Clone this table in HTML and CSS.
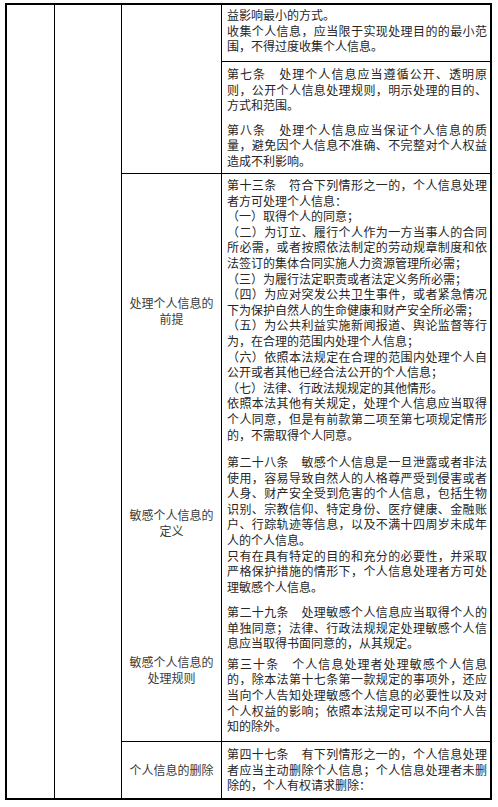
FILE: index.html
```html
<!DOCTYPE html>
<html lang="zh-CN">
<head>
<meta charset="utf-8">
<title>个人信息保护法</title>
<link rel="stylesheet" href="styles.css">
</head>
<body>
<div class="sheet">
  <div class="col c1"></div>
  <div class="col c2"></div>
  <div class="main">
    <div class="row r1">
      <div class="label"></div>
      <div class="content split">
        <div class="sub s1">
          <span class="ln">益影响最小的方式。</span>
          <span class="ln j">收集个人信息，应当限于实现处理目的的最小范</span>
          <span class="ln">围，不得过度收集个人信息。</span>
        </div>
        <div class="sub s2">
          <div class="para">
            <span class="ln j">第七条　处理个人信息应当遵循公开、透明原</span>
            <span class="ln j">则，公开个人信息处理规则，明示处理的目的、</span>
            <span class="ln">方式和范围。</span>
          </div>
          <div class="para gap9">
            <span class="ln j">第八条　处理个人信息应当保证个人信息的质</span>
            <span class="ln j">量，避免因个人信息不准确、不完整对个人权益</span>
            <span class="ln">造成不利影响。</span>
          </div>
        </div>
      </div>
    </div>

    <div class="row r2">
      <div class="label">处理个人信息的<br>前提</div>
      <div class="content">
        <span class="ln j">第十三条　符合下列情形之一的，个人信息处理</span>
        <span class="ln">者方可处理个人信息：</span>
        <span class="ln">（一）取得个人的同意；</span>
        <span class="ln j">（二）为订立、履行个人作为一方当事人的合同</span>
        <span class="ln j">所必需，或者按照依法制定的劳动规章制度和依</span>
        <span class="ln">法签订的集体合同实施人力资源管理所必需；</span>
        <span class="ln">（三）为履行法定职责或者法定义务所必需；</span>
        <span class="ln j">（四）为应对突发公共卫生事件，或者紧急情况</span>
        <span class="ln">下为保护自然人的生命健康和财产安全所必需；</span>
        <span class="ln j">（五）为公共利益实施新闻报道、舆论监督等行</span>
        <span class="ln">为，在合理的范围内处理个人信息；</span>
        <span class="ln j">（六）依照本法规定在合理的范围内处理个人自</span>
        <span class="ln">公开或者其他已经合法公开的个人信息；</span>
        <span class="ln">（七）法律、行政法规规定的其他情形。</span>
        <span class="ln j">依照本法其他有关规定，处理个人信息应当取得</span>
        <span class="ln j">个人同意，但是有前款第二项至第七项规定情形</span>
        <span class="ln">的，不需取得个人同意。</span>
      </div>
    </div>

    <div class="row r3">
      <div class="label">敏感个人信息的<br>定义</div>
      <div class="content">
        <span class="ln j">第二十八条　敏感个人信息是一旦泄露或者非法</span>
        <span class="ln j">使用，容易导致自然人的人格尊严受到侵害或者</span>
        <span class="ln j">人身、财产安全受到危害的个人信息，包括生物</span>
        <span class="ln j">识别、宗教信仰、特定身份、医疗健康、金融账</span>
        <span class="ln j">户、行踪轨迹等信息，以及不满十四周岁未成年</span>
        <span class="ln">人的个人信息。</span>
        <span class="ln j">只有在具有特定的目的和充分的必要性，并采取</span>
        <span class="ln j">严格保护措施的情形下，个人信息处理者方可处</span>
        <span class="ln">理敏感个人信息。</span>
      </div>
    </div>

    <div class="row r4">
      <div class="label">敏感个人信息的<br>处理规则</div>
      <div class="content">
        <div class="para">
          <span class="ln j">第二十九条　处理敏感个人信息应当取得个人的</span>
          <span class="ln j">单独同意；法律、行政法规规定处理敏感个人信</span>
          <span class="ln">息应当取得书面同意的，从其规定。</span>
        </div>
        <div class="para gap5">
          <span class="ln j">第三十条　个人信息处理者处理敏感个人信息</span>
          <span class="ln j">的，除本法第十七条第一款规定的事项外，还应</span>
          <span class="ln j">当向个人告知处理敏感个人信息的必要性以及对</span>
          <span class="ln j">个人权益的影响；依照本法规定可以不向个人告</span>
          <span class="ln">知的除外。</span>
        </div>
      </div>
    </div>

    <div class="row r5">
      <div class="label">个人信息的删除</div>
      <div class="content">
        <span class="ln j">第四十七条　有下列情形之一的，个人信息处理</span>
        <span class="ln j">者应当主动删除个人信息；个人信息处理者未删</span>
        <span class="ln">除的，个人有权请求删除：</span>
      </div>
    </div>
  </div>
</div>
</body>
</html>
```

FILE: styles.css
```css
html, body {
  margin: 0;
  padding: 0;
  background: #ffffff;
}

body {
  font-family: "Noto Sans CJK SC", "Noto Sans", sans-serif;
  font-size: 12px;
  color: #262626;
  text-spacing-trim: space-all;
}

.sheet {
  margin: 3px 0 0 5px;
  width: 487px;
  height: 797px;
  box-sizing: border-box;
  border: 2px solid #000;
  display: flex;
}

.col {
  box-sizing: border-box;
  border-right: 1px solid #000;
  flex: none;
}

.c1 { width: 48px; }
.c2 { width: 67px; }

.main {
  flex: 1;
  display: flex;
  flex-direction: column;
}

.row {
  display: flex;
  box-sizing: border-box;
  flex: none;
}

.label {
  width: 100px;
  box-sizing: border-box;
  border-right: 1px solid #000;
  flex: none;
  display: flex;
  align-items: center;
  justify-content: center;
  text-align: center;
  line-height: 15.6px;
  color: #3a3a3a;
}

.content {
  flex: 1;
  box-sizing: border-box;
  padding: 0 3px 0 5px;
  line-height: 15.6px;
}

.ln {
  display: block;
}

.j {
  text-align: justify;
  text-align-last: justify;
}

.r1 { height: 169px; border-bottom: 1px solid #000; }
.r2 { height: 274px; }
.r3 { height: 150px; }
.r4 { height: 144px; border-bottom: 1px solid #000; }
.r5 { height: 56px; }

.split {
  display: flex;
  flex-direction: column;
  padding: 0;
}

.sub {
  box-sizing: border-box;
  padding: 0 3px 0 5px;
}

.s1 {
  height: 57px;
  padding-top: 2px;
  border-bottom: 1px solid #000;
}

.s2 {
  flex: 1;
  padding-top: 4px;
}

.r2 .content { padding-top: 3px; }
.r3 .content { padding-top: 6px; }
.r4 .content { padding-top: 6px; }
.r5 .content { padding-top: 4px; }

.gap9 { margin-top: 9px; }
.gap5 { margin-top: 5px; }
```
